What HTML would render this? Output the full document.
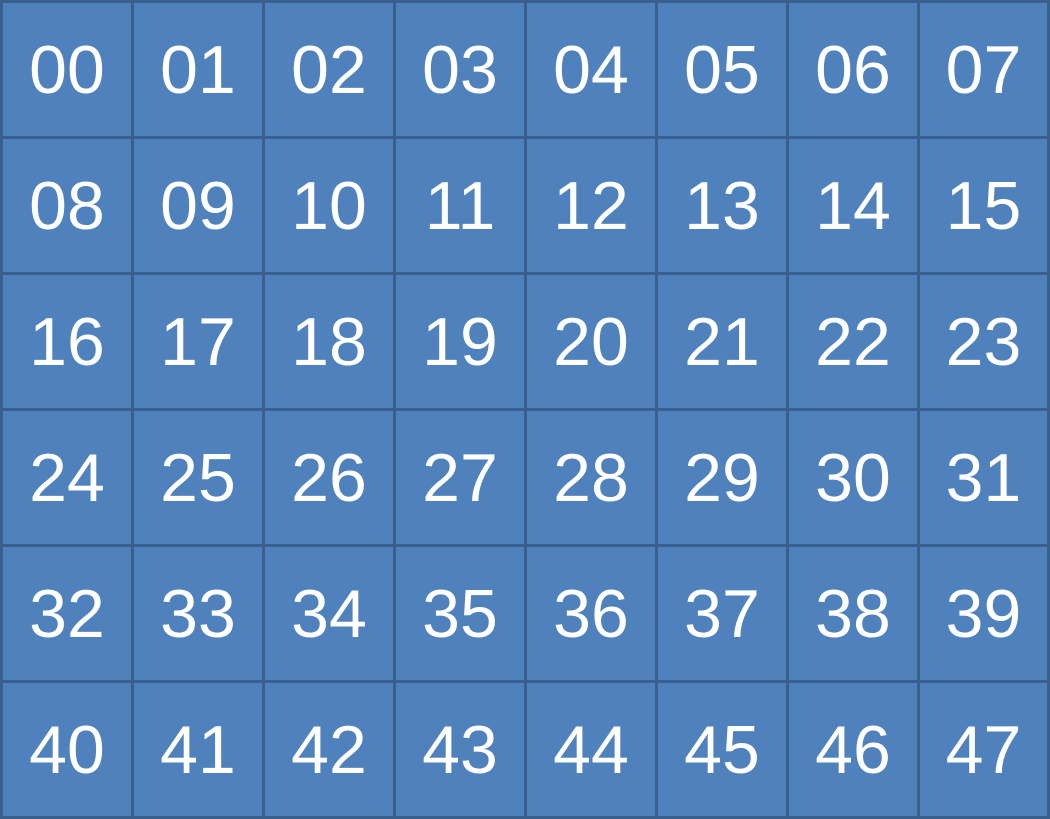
<!DOCTYPE html>
<html><head><style>
html,body{margin:0;padding:0;}
body{width:1050px;height:819px;overflow:hidden;}
.g{position:relative;width:1050px;height:819px;background:#3b5f8d;}
.c{position:absolute;background:#4f81bd;color:#fff;font-family:"Liberation Sans",sans-serif;font-size:68px;display:flex;align-items:center;justify-content:center;}
</style></head><body><div class="g" id="g">
<script>
var xs=[0,131,262,393,524,655,786,917,1047],ys=[0,136,272,408,544,680,816];
var h='';for(var r=0;r<6;r++)for(var c=0;c<8;c++){var n=r*8+c;var t=(n<10?'0':'')+n;
h+='<div class="c" style="left:'+(xs[c]+3)+'px;top:'+(ys[r]+3)+'px;width:'+(xs[c+1]-xs[c]-3)+'px;height:'+(ys[r+1]-ys[r]-3)+'px">'+t+'</div>';}
document.getElementById('g').innerHTML=h;
</script>
</div></body></html>
